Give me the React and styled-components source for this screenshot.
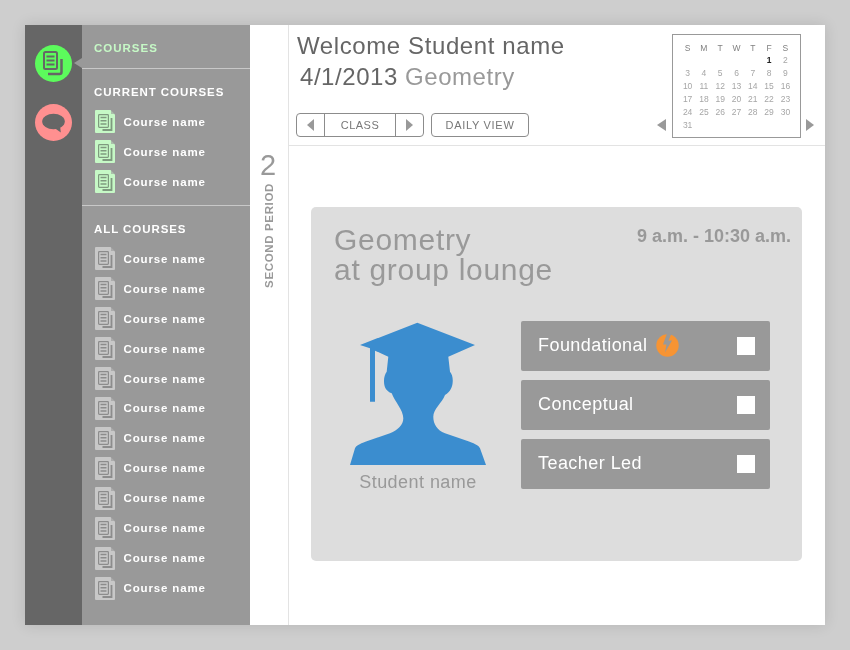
import React from 'react';
import styled, { createGlobalStyle } from 'styled-components';

const GlobalStyle = createGlobalStyle`
  html, body {
    margin: 0;
    height: 100%;
    background: #cecece;
    font-family: "Liberation Sans", Arial, sans-serif;
  }
`;

const currentCourses = ['Course name', 'Course name', 'Course name'];
const allCourses = Array(12).fill('Course name');
const days = ['S', 'M', 'T', 'W', 'T', 'F', 'S'];
const tasks = ['Foundational', 'Conceptual', 'Teacher Led'];

function DocIcon({ color, ink }) {
  return (
    <svg width="20" height="23" viewBox="0 0 20 23">
      <path d="M1 0H15.500L20 4.500V22Q20 23 19 23H1Q0 23 0 22V1Q0 0 1 0Z" fill={color} />
      <path d="M16 0L20 4H16Z" fill="#999999" opacity="0.6" />
      <rect x="3.600" y="4.600" width="9.800" height="12.800" rx="0.800" fill="none" stroke={ink} strokeWidth="1.200" />
      <path d="M5.500 7.600H11.500M5.500 10.800H11.500M5.500 14H11.500" stroke={ink} strokeWidth="1.500" />
      <path d="M16.500 8V20H7.500" fill="none" stroke={ink} strokeWidth="1.800" />
    </svg>
  );
}

function RailDocIcon() {
  return (
    <svg width="22" height="25" viewBox="0 0 22 25">
      <rect x="1" y="1" width="13" height="17" rx="1.500" fill="none" stroke="#666666" strokeWidth="2" />
      <path d="M3.500 5.500H11.500M3.500 9.500H11.500M3.500 13.500H11.500" stroke="#666666" strokeWidth="2" />
      <path d="M18.500 8V21Q18.500 23 16.500 23H5" fill="none" stroke="#666666" strokeWidth="2.500" />
    </svg>
  );
}

function ChatIcon() {
  return (
    <svg width="24" height="20" viewBox="0 0 24 20">
      <ellipse cx="11.500" cy="8.500" rx="11.300" ry="7.700" fill="#666666" />
      <path d="M12.500 15L18.800 19.500L18 12Z" fill="#666666" />
    </svg>
  );
}

function BoltIcon() {
  return (
    <svg width="23" height="23" viewBox="0 0 23 23">
      <circle cx="11.500" cy="11.500" r="11.200" fill="#f79433" />
      <path d="M11 -0.500H15.500L12.500 6.500H16L9 18.500L10.500 10.500H7Z" fill="#999999" />
    </svg>
  );
}

function GraduateIcon() {
  return (
    <svg width="138" height="144" viewBox="0 0 138 144">
      <path
        d="M68.300 .7L126 23L99.300 34.700L101 49.700C103 52 104 56 103.700 59.700C103.500 65 101.500 69.500 96 73C93 81 84.300 87 84.300 94.700C84.300 102 88 108 96 111.300L120 119.500C127 122 130 124 131 126.300L137 143H1L6 126.300C7 124 10 122 17 119.500L41 111.300C49 108 54.300 103 54.300 96.300C54.300 88 46 80 42.700 71.300C37 69 35.200 65 35 59.700C34.800 56 36 52 37.700 49.700L39.300 34.700L26 28.700V79.700H21V26.300L11 23Z"
        fill="#3b8dcf"
      />
    </svg>
  );
}

export default function App() {
  return (
    <>
      <GlobalStyle />
      <Page>
        <Window>
          <Rail>
            <RailButton $bg="#5cfb5c" $active>
              <RailDocIcon />
            </RailButton>
            <RailButton $bg="#ff9090">
              <ChatIcon />
            </RailButton>
          </Rail>

          <Sidebar>
            <SidebarTitle>COURSES</SidebarTitle>
            <Section>
              <SectionTitle>CURRENT COURSES</SectionTitle>
              {currentCourses.map((name, i) => (
                <CourseRow key={i}>
                  <DocIcon color="#c6f9c6" ink="#7f9a7f" />
                  <span>{name}</span>
                </CourseRow>
              ))}
            </Section>
            <Section>
              <SectionTitle>ALL COURSES</SectionTitle>
              {allCourses.map((name, i) => (
                <CourseRow key={i}>
                  <DocIcon color="#c8c8c8" ink="#8c8c8c" />
                  <span>{name}</span>
                </CourseRow>
              ))}
            </Section>
          </Sidebar>

          <PeriodColumn>
            <PeriodNumber>2</PeriodNumber>
            <PeriodLabel>SECOND PERIOD</PeriodLabel>
          </PeriodColumn>

          <Main>
            <Header>
              <Heading>
                <Welcome>Welcome Student name</Welcome>
                <DateLine>
                  4/1/2013 <Subject>Geometry</Subject>
                </DateLine>
                <Toolbar>
                  <Segmented>
                    <ArrowCell>
                      <Arrow $dir="left" />
                    </ArrowCell>
                    <ClassCell>CLASS</ClassCell>
                    <ArrowCell>
                      <Arrow $dir="right" />
                    </ArrowCell>
                  </Segmented>
                  <ViewButton>DAILY VIEW</ViewButton>
                </Toolbar>
              </Heading>
              <CalendarWrap>
                <CalendarArrow $dir="left" />
                <Calendar>
                  {days.map((d, i) => (
                    <DayName key={i}>{d}</DayName>
                  ))}
                  <DateCell $start={6} $today>1</DateCell>
                  {Array.from({ length: 30 }, (_, i) => (
                    <DateCell key={i}>{i + 2}</DateCell>
                  ))}
                </Calendar>
                <CalendarArrow $dir="right" />
              </CalendarWrap>
            </Header>

            <Content>
              <Card>
                <CardTop>
                  <CardTitle>
                    Geometry
                    <br />
                    at group lounge
                  </CardTitle>
                  <CardTime>9 a.m. - 10:30 a.m.</CardTime>
                </CardTop>
                <CardBody>
                  <Student>
                    <GraduateIcon />
                    <StudentName>Student name</StudentName>
                  </Student>
                  <TaskList>
                    {tasks.map((task, i) => (
                      <Task key={task}>
                        <TaskName>{task}</TaskName>
                        {i === 0 && <BoltSlot><BoltIcon /></BoltSlot>}
                        <TaskCheck />
                      </Task>
                    ))}
                  </TaskList>
                </CardBody>
              </Card>
            </Content>
          </Main>
        </Window>
      </Page>
    </>
  );
}

const Page = styled.div`
  width: 850px;
  height: 650px;
  padding: 25px;
  box-sizing: border-box;
  overflow: hidden;
  will-change: transform;
`;

const Window = styled.div`
  display: flex;
  width: 800px;
  height: 600px;
  background: #ffffff;
  box-shadow: 0 0 14px rgba(0, 0, 0, 0.12);
`;

const Rail = styled.div`
  width: 57px;
  flex: none;
  padding-top: 20px;
  box-sizing: border-box;
  display: flex;
  flex-direction: column;
  align-items: center;
  gap: 22px;
  background: #666666;
`;

const RailButton = styled.div`
  position: relative;
  width: 37px;
  height: 37px;
  border-radius: 50%;
  display: flex;
  align-items: center;
  justify-content: center;
  background: ${(p) => p.$bg};

  svg {
    margin-left: 1px;
  }

  ${(p) =>
    p.$active &&
    `
    &::after {
      content: '';
      position: absolute;
      right: -10px;
      top: 13px;
      border-style: solid;
      border-width: 5.5px 8px 5.5px 0;
      border-color: transparent #999999 transparent transparent;
    }
  `}
`;

const Sidebar = styled.div`
  width: 168px;
  flex: none;
  background: #999999;
  color: #ffffff;
  font-weight: bold;
`;

const SidebarTitle = styled.div`
  height: 44px;
  padding: 17px 0 0 12px;
  box-sizing: border-box;
  border-bottom: 1px solid #c8c8c8;
  font-size: 11.5px;
  line-height: 13px;
  letter-spacing: 1px;
  color: #c6f9c6;
`;

const Section = styled.div`
  padding: 16px 0 8px;

  & + & {
    border-top: 1px solid #c8c8c8;
  }
`;

const SectionTitle = styled.div`
  padding-left: 12px;
  margin-bottom: 8px;
  font-size: 11.5px;
  line-height: 14px;
  letter-spacing: 0.93px;
`;

const CourseRow = styled.div`
  height: 29.95px;
  padding-left: 13px;
  display: flex;
  align-items: center;
  gap: 8.5px;
  font-size: 11.5px;
  letter-spacing: 0.85px;
`;

const PeriodColumn = styled.div`
  width: 39px;
  flex: none;
  padding-top: 124px;
  box-sizing: border-box;
  display: flex;
  flex-direction: column;
  align-items: center;
  border-right: 1px solid #e3e3e3;
  color: #999999;
`;

const PeriodNumber = styled.div`
  margin-right: 2px;
  font-size: 29px;
  line-height: 32px;
`;

const PeriodLabel = styled.div`
  margin-top: 2px;
  writing-mode: vertical-rl;
  transform: rotate(180deg);
  font-size: 11.5px;
  font-weight: bold;
  letter-spacing: 0.65px;
`;

const Main = styled.div`
  flex: 1;
  display: flex;
  flex-direction: column;
  min-width: 0;
`;

const Header = styled.div`
  height: 120px;
  flex: none;
  display: flex;
  justify-content: space-between;
  border-bottom: 1px solid #e3e3e3;
`;

const Heading = styled.div`
  padding: 6px 0 0 7px;
`;

const Welcome = styled.div`
  margin-left: 1px;
  font-size: 24px;
  line-height: 30px;
  letter-spacing: 0.6px;
  color: #666666;
`;

const DateLine = styled.div`
  margin: 1px 0 0 4px;
  font-size: 24px;
  line-height: 30px;
  letter-spacing: 0.55px;
  color: #666666;
`;

const Subject = styled.span`
  color: #999999;
`;

const Toolbar = styled.div`
  display: flex;
  gap: 7px;
  margin-top: 21px;
`;

const Segmented = styled.div`
  display: flex;
  height: 22px;
  border: 1px solid #8c8c8c;
  border-radius: 4px;
`;

const ArrowCell = styled.div`
  width: 27px;
  display: flex;
  align-items: center;
  justify-content: center;
`;

const Arrow = styled.div`
  border-style: solid;
  border-width: 6px 0 6px 7px;
  border-color: transparent transparent transparent #999999;
  transform: ${(p) => (p.$dir === 'left' ? 'scaleX(-1)' : 'none')};
`;

const ClassCell = styled.div`
  width: 70px;
  border-left: 1px solid #8c8c8c;
  border-right: 1px solid #8c8c8c;
  text-align: center;
  font-size: 11px;
  line-height: 22px;
  letter-spacing: 0.5px;
  color: #777777;
`;

const ViewButton = styled.div`
  width: 96px;
  height: 22px;
  border: 1px solid #8c8c8c;
  border-radius: 4px;
  text-align: center;
  font-size: 11px;
  line-height: 22px;
  letter-spacing: 0.7px;
  color: #777777;
`;

const CalendarWrap = styled.div`
  display: flex;
  align-items: flex-end;
  gap: 5px;
  padding: 9px 11px 7px 0;
`;

const CalendarArrow = styled.div`
  margin-bottom: 7px;
  margin-right: ${(p) => (p.$dir === 'left' ? '1px' : '0')};
  border-style: solid;
  border-width: ${(p) => (p.$dir === 'left' ? '6px 0 6px 9px' : '6px 0 6px 8px')};
  border-color: transparent transparent transparent #999999;
  transform: ${(p) => (p.$dir === 'left' ? 'scaleX(-1)' : 'none')};
`;

const Calendar = styled.div`
  width: 129px;
  height: 104px;
  box-sizing: border-box;
  padding: 7px 7px 0;
  border: 1px solid #999999;
  display: grid;
  grid-template-columns: repeat(7, 16.3px);
  grid-template-rows: 12px;
  grid-auto-rows: 13px;
  justify-content: center;
  align-content: start;
  text-align: center;
  font-size: 8.5px;
  line-height: 13px;
`;

const DayName = styled.div`
  color: #808080;
`;

const DateCell = styled.div`
  color: ${(p) => (p.$today ? '#222222' : '#a6a6a6')};
  font-weight: ${(p) => (p.$today ? 'bold' : 'normal')};
  ${(p) => p.$start && `grid-column-start: ${p.$start};`}
`;

const Content = styled.div`
  flex: 1;
  padding: 61px 23px 64px 22px;
  display: flex;
`;

const Card = styled.div`
  flex: 1;
  padding: 18px 11px 0 23px;
  background: #dddddd;
  border-radius: 5px;
`;

const CardTop = styled.div`
  display: flex;
  justify-content: space-between;
  align-items: flex-start;
`;

const CardTitle = styled.div`
  font-size: 30px;
  line-height: 30px;
  letter-spacing: 0.7px;
  color: #999999;
`;

const CardTime = styled.div`
  font-size: 18px;
  line-height: 22px;
  font-weight: bold;
  color: #999999;
`;

const CardBody = styled.div`
  display: flex;
  margin-top: 36px;
`;

const Student = styled.div`
  width: 138px;
  margin: 1px 0 0 15px;
  display: flex;
  flex-direction: column;
  align-items: center;
`;

const StudentName = styled.div`
  margin-top: 5px;
  font-size: 18px;
  line-height: 22px;
  letter-spacing: 0.45px;
  color: #999999;
`;

const TaskList = styled.div`
  margin-left: 34px;
  width: 249px;
  display: flex;
  flex-direction: column;
  gap: 9px;
`;

const Task = styled.div`
  height: 50px;
  padding: 0 15px 0 17px;
  display: flex;
  align-items: center;
  background: #999999;
  border-radius: 2px;
`;

const TaskName = styled.div`
  margin: 0 9px 2px 0;
  font-size: 18px;
  letter-spacing: 0.45px;
  color: #ffffff;
`;

const BoltSlot = styled.div`
  display: flex;
  margin-bottom: 2px;
`;

const TaskCheck = styled.div`
  width: 18px;
  height: 18px;
  margin-left: auto;
  background: #ffffff;
`;
